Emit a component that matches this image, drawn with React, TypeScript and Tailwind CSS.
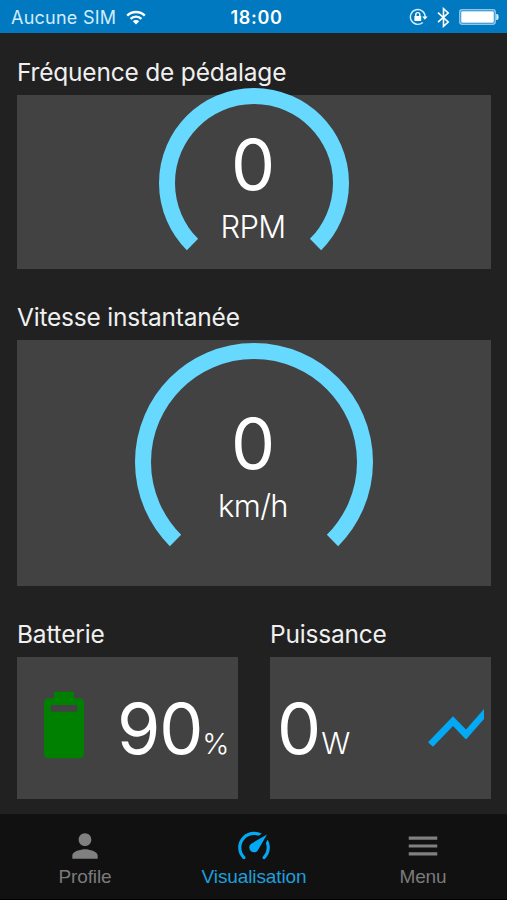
import type { ReactNode } from "react";

function StatusBar() {
  return (
    <header className="flex h-[33px] items-center bg-[#0079c1] px-[11px] pt-px text-white">
      <div className="flex flex-1 items-center gap-[10px]">
        <span className="whitespace-nowrap text-[18px] tracking-[0.25px] text-[#d3ecfb]">Aucune SIM</span>
        <svg width="20" height="15" viewBox="0 0 20 15" fill="none" stroke="white" strokeWidth="2.4">
          <path d="M1.2 5.6a12.4 12.4 0 0 1 17.6 0" />
          <path d="M4.6 8.9a7.6 7.6 0 0 1 10.8 0" />
          <path d="M10 14.6 6.8 11.3a4.5 4.5 0 0 1 6.4 0z" fill="white" stroke="none" />
        </svg>
      </div>
      <span className="pl-[6px] text-[18px] font-semibold tracking-[0.7px]">18:00</span>
      <div className="flex flex-1 items-center justify-end">
        <svg width="19" height="18" viewBox="0 0 19 18" fill="none" stroke="#d3ecfb" strokeWidth="1.4">
          <path d="M16.2 9a7.4 7.4 0 1 0-2.4 5.4" />
          <path d="M13.2 8.4h5.4l-2.7 3.4z" fill="white" stroke="none" />
          <rect x="5.4" y="8" width="6.8" height="5" rx="0.6" fill="white" stroke="none" />
          <path d="M6.8 8.4V6.6a2 2 0 0 1 4 0v1.8" stroke="white" />
        </svg>
        <svg className="ml-[9px]" width="13" height="21" viewBox="0 0 13 21" fill="none" stroke="white" strokeWidth="1.6">
          <path d="M1 5.6l10.2 9.4-4.7 4.3V1.7l4.7 4.3L1 15.2" />
        </svg>
        <svg className="ml-[9px] -mr-[3px]" width="40" height="16" viewBox="0 0 40 16">
          <rect x="0.8" y="0.8" width="35.4" height="14.4" rx="2.4" fill="none" stroke="#8cc8ec" strokeWidth="1.5" />
          <rect x="2.2" y="2.2" width="32.6" height="11.6" rx="1" fill="white" />
          <path d="M37.2 5h0.8a1.6 3 0 0 1 0 6h-0.8z" fill="#d3ecfb" />
        </svg>
      </div>
    </header>
  );
}

function Label({ children }: { children: ReactNode }) {
  return (
    <h2 className="flex h-[46px] items-center whitespace-nowrap text-[24.5px] tracking-[-0.2px] text-[#f0f0f0]">
      {children}
    </h2>
  );
}

// 270° ring, open at the bottom
function Ring({ radius }: { radius: number }) {
  const size = radius * 2;
  const mid = radius - 8;
  const d = mid * Math.SQRT1_2;
  return (
    <svg className="block" width={size} height={size} viewBox={`0 0 ${size} ${size}`} fill="none">
      <path
        d={`M${radius - d} ${radius + d}A${mid} ${mid} 0 1 1 ${radius + d} ${radius + d}`}
        stroke="#67d9ff"
        strokeWidth="16"
      />
    </svg>
  );
}

function Reading({ value, unit }: { value: number; unit: string }) {
  return (
    <div className="absolute inset-x-0 top-[40px] flex flex-col items-center pr-[2px] text-white">
      <span className="text-[70px] leading-[72px] font-[400]">{value}</span>
      <span className="text-[31px] leading-[52px] font-[360] tracking-[-0.6px]">{unit}</span>
    </div>
  );
}

function Tab({ label, icon, active }: { label: string; icon: string; active?: boolean }) {
  return (
    <button
      className={`flex flex-1 flex-col items-center pt-[13px] ${active ? "text-[#1e9fdc]" : "text-[#7b7b7b]"}`}
    >
      <svg width="38" height="38" viewBox="0 0 24 24" className={active ? "fill-[#03a9f4]" : "fill-[#808080]"}>
        <path d={icon} />
      </svg>
      <span className="pl-px font-['Liberation_Sans',sans-serif] text-[19px] leading-[24px] tracking-[-0.12px]">
        {label}
      </span>
    </button>
  );
}

const personIcon =
  "M12 12c2.21 0 4-1.79 4-4s-1.79-4-4-4-4 1.79-4 4 1.79 4 4 4zm0 2c-2.67 0-8 1.34-8 4v2h16v-2c0-2.66-5.33-4-8-4z";
const speedIcon =
  "M12,16A3,3 0 0,1 9,13C9,11.88 9.61,10.9 10.5,10.39L20.21,4.77L14.68,14.35C14.18,15.33 13.17,16 12,16M12,3C13.81,3 15.5,3.5 16.97,4.32L14.87,5.53C14,5.19 13,5 12,5A8,8 0 0,0 4,13C4,15.21 4.89,17.21 6.34,18.65H6.35C6.74,19.04 6.74,19.67 6.35,20.06C5.96,20.45 5.32,20.45 4.93,20.07V20.07C3.12,18.26 2,15.76 2,13A10,10 0 0,1 12,3M22,13C22,15.76 20.88,18.26 19.07,20.07V20.07C18.68,20.45 18.05,20.45 17.66,20.06C17.27,19.67 17.27,19.04 17.66,18.65V18.65C19.11,17.2 20,15.21 20,13C20,12 19.81,11 19.46,10.1L20.67,8C21.5,9.5 22,11.18 22,13Z";
const menuIcon = "M3 18h18v-2H3v2zm0-5h18v-2H3v2zm0-7v2h18V6H3z";
const batteryIcon =
  "M16,8H8V6H16M16.67,4H15V2H9V4H7.33A1.33,1.33 0 0,0 6,5.33V20.67C6,21.4 6.6,22 7.33,22H16.67A1.33,1.33 0 0,0 18,20.67V5.33C18,4.6 17.4,4 16.67,4Z";

export default function App() {
  return (
    <div className="flex h-[900px] w-[507px] flex-col overflow-hidden bg-[#212121] font-['Inter',sans-serif]">
      <StatusBar />

      <main className="flex-1 pt-4 pr-4 pl-[17px]">
        {/* Cadence */}
        <section>
          <Label>Fréquence de pédalage</Label>
          <div className="relative flex h-[174px] justify-center bg-[#424242]">
            <div className="-mt-[7px]">
              <Ring radius={95} />
            </div>
            <div className="absolute inset-x-0 -top-[6px]">
              <Reading value={0} unit="RPM" />
            </div>
          </div>
        </section>

        {/* Speed */}
        <section className="mt-[25px]">
          <Label>Vitesse instantanée</Label>
          <div className="relative flex h-[246px] justify-center bg-[#424242] pt-[3px]">
            <Ring radius={119} />
            <div className="absolute inset-x-0 top-[28px]">
              <Reading value={0} unit="km/h" />
            </div>
          </div>
        </section>

        <div className="mt-[25px] flex gap-8">
          <section className="w-[221px]">
            <Label>Batterie</Label>
            <div className="flex h-[142px] items-center bg-[#424242] pl-[7px] text-white">
              <svg width="80" height="80" viewBox="0 0 24 24" className="mb-[7px] shrink-0 fill-[#008000]">
                <path d={batteryIcon} />
              </svg>
              <div className="ml-[13px] flex items-baseline pt-[2px]">
                <span className="text-[70px] leading-[72px] font-[400] tracking-[-1.2px]">90</span>
                <span className="text-[29px] font-[360]">%</span>
              </div>
            </div>
          </section>

          <section className="w-[221px]">
            <Label>Puissance</Label>
            <div className="flex h-[142px] items-center justify-between bg-[#424242] pr-[7px] pl-[7px] text-white">
              <div className="flex items-baseline pt-[2px]">
                <span className="text-[70px] leading-[72px] font-[400]">0</span>
                <span className="text-[30px] font-[360] tracking-[-0.3px]">W</span>
              </div>
              <svg width="56" height="38" viewBox="0 0 56 38" className="fill-[#03a9f4]">
                <path d="M0 33.2 25 7.2 38 20.6 56 0v10L38 30.4 25 17 5 37.8z" />
              </svg>
            </div>
          </section>
        </div>
      </main>

      <nav className="flex h-[86px] border-b border-black bg-[#111111]">
        <Tab label="Profile" icon={personIcon} />
        <Tab label="Visualisation" icon={speedIcon} active />
        <Tab label="Menu" icon={menuIcon} />
      </nav>
    </div>
  );
}
